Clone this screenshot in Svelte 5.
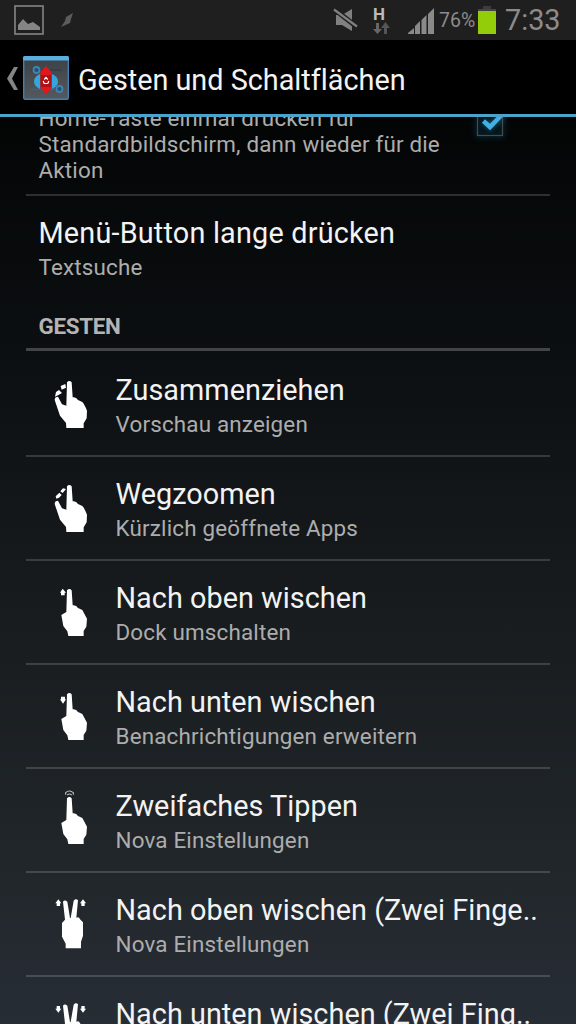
<script>
  const gestures = [
    { icon: 'pinch',     title: 'Zusammenziehen',  summary: 'Vorschau anzeigen' },
    { icon: 'spread',    title: 'Wegzoomen',       summary: 'Kürzlich geöffnete Apps' },
    { icon: 'up',        title: 'Nach oben wischen',  summary: 'Dock umschalten' },
    { icon: 'down',      title: 'Nach unten wischen', summary: 'Benachrichtigungen erweitern' },
    { icon: 'doubletap', title: 'Zweifaches Tippen',  summary: 'Nova Einstellungen' },
    { icon: 'up2',       title: 'Nach oben wischen (Zwei Finge..', summary: 'Nova Einstellungen' },
    { icon: 'down2',     title: 'Nach unten wischen (Zwei Fing..', summary: '' },
  ];
</script>

<div class="screen">
  <header class="status">
    <svg class="picture" width="30" height="30" viewBox="0 0 30 30">
      <rect x="1" y="1" width="28" height="28" fill="none" stroke="#858585" stroke-width="1.600" />
      <path d="M4 25V20L9 14L14 19L19 17L26 22V25Z" fill="#858585" />
    </svg>
    <svg class="bolt" width="14" height="16" viewBox="0 0 14 16">
      <path d="M12 0L5 4L4 8L0 14L9 10L10 6Z" fill="#5c5c5c" />
    </svg>

    <svg class="mute" width="26" height="24" viewBox="0 0 26 24">
      <path d="M3 7H9L19 1V23L9 17H3Z" fill="#808080" />
      <path d="M1 1L24 19" stroke="#1f1f1f" stroke-width="5" />
      <path d="M1 1.500L24 18.500" stroke="#808080" stroke-width="2.200" />
    </svg>
    <div class="network">
      <span>H</span>
      <svg width="17" height="13" viewBox="0 0 17 13">
        <path d="M3 1H6V7H9L4.500 12L0 7H3Z" fill="#666" />
        <path d="M11 12H14V6H17L12.500 0L8 6H11Z" fill="#555" />
      </svg>
    </div>
    <svg class="signal" width="27" height="26" viewBox="0 0 27 26">
      <path d="M0 26V25L6 20V26ZM7 26V18L12 13V26ZM13.500 26V12L18.500 7V26ZM20 26V6L26 0V26Z" fill="#8a8a8a" />
    </svg>
    <span class="percent">76%</span>
    <svg class="battery" width="18" height="28" viewBox="0 0 18 28">
      <rect x="5" y="0" width="8" height="3" fill="#3c3c3c" />
      <rect x="0" y="3" width="18" height="2" fill="#444" />
      <rect x="0" y="5" width="18" height="23" fill="#93cc08" />
    </svg>
    <span class="clock">7:33</span>
  </header>

  <div class="actionbar">
    <svg class="back" width="11" height="23" viewBox="0 0 11 23">
      <path d="M7 0H11L5 11.500L11 23H7L0 11.500Z" fill="#858585" />
    </svg>
    <svg class="app" width="46" height="44" viewBox="0 0 46 44">
      <defs>
        <linearGradient id="tile" x1="0" y1="0" x2="0" y2="1">
          <stop offset="0" stop-color="#3c4145" />
          <stop offset="1" stop-color="#55595d" />
        </linearGradient>
      </defs>
      <rect x=".7" y="1" width="44.600" height="42.300" rx="1.500" fill="url(#tile)" stroke="#417fb0" stroke-width="1.400" />
      <rect x="0" y="0" width="46" height="4.500" rx="1.500" fill="#5aaee0" />
      <path d="M8 14H39" stroke="#2d3f52" stroke-width="1.500" />
      <path d="M8 33.500H32" stroke="#35658d" stroke-width="1.500" />
      <circle cx="13.500" cy="14" r="3" fill="#2c4e6c" stroke="#3d83b5" stroke-width="1.800" />
      <circle cx="36.500" cy="33" r="3" fill="#2c4e6c" stroke="#3d83b5" stroke-width="1.800" />
      <path d="M17 18V33C9 30 9 21 17 18ZM29 18V33C37 30 37 21 29 18Z" fill="#35a5de" />
      <path d="M23 10L28.500 16V32L23 38.500L17.500 32V16Z" fill="#e0181b" />
      <rect x="18" y="19" width="10" height="12" fill="#b01016" />
      <path d="M21.300 23.500L23 21.500L24.700 23.500M25.800 25L24.800 27.500H21.200L20.200 25" fill="none" stroke="#fff" stroke-width="1.200" />
    </svg>
    <h1>Gesten und Schaltflächen</h1>
  </div>

  <main>
    <div class="pref home">
      <p>Home-Taste einmal drücken für<br />Standardbildschirm, dann wieder für die<br />Aktion</p>
      <svg class="check" width="36" height="36" viewBox="0 0 36 36">
        <rect x="5.500" y="5.500" width="25" height="25" fill="none" stroke="#4a4a4a" stroke-width="1.200" />
        <path d="M11.500 16L18 22L31 8.500" fill="none" stroke="#43b0e4" stroke-width="4.500" />
      </svg>
    </div>

    <div class="pref menu">
      <div class="text">
        <h2>Menü-Button lange drücken</h2>
        <p>Textsuche</p>
      </div>
    </div>

    <h3>GESTEN</h3>

    {#each gestures as { icon, title, summary }}
      <div class="pref gesture">
        <svg class="hand" width="70" height="70" viewBox="0 0 210 210" fill="#fff">
          {#if icon === 'pinch' || icon === 'spread'}
            <path d="M81 37Q88 29 95 37L98 82Q108 80 114 90L127 96Q133 102 141 122L140 145L131 160V174H79L78 159L60 137L44 90Q44 80 54 80L66 103L79 107Z" />
            {#if icon === 'pinch'}
              <path d="M76 42L78 53L65 59L62 48ZM57 60L66 69L54 76L45 80L48 66Z" />
            {:else}
              <path d="M69 43L78 45L68 57L61 52ZM58 56L65 63L57 71L49 74L47 67Z" />
            {/if}
          {:else if icon === 'up2' || icon === 'down2'}
            <path d="M69 35Q74 28 82 35L90 84H92L101 32Q108 24 114 31L109 83Q117 79 120 88L129 97V137L123 155V175H77V161L66 140V99L75 89Z" />
            {#if icon === 'up2'}
              <path d="M55 28L64 40H60V48H50V40H46ZM129 28L138 40H134V48H124V40H120Z" />
            {:else}
              <path d="M50 36H60V44H64L55 56L46 44H50ZM124 36H134V44H138L129 56L120 44H124Z" />
            {/if}
          {:else}
            <path d="M81 37Q88 29 95 37L98 82Q108 80 114 90L127 96L141 122L139 146L131 159V174H85L82 160L70 144L64 111L79 102Z" />
            {#if icon === 'up'}
              <path d="M68 32L78 44H74V52H63V44H60Z" />
            {:else if icon === 'down'}
              <path d="M63 44H75V52H78L69 65L60 52H63Z" />
            {:else}
              <path d="M77 26V20Q88 10 100 20V26M82 27Q88 21 95 27" fill="none" stroke="#bbb" stroke-width="3.500" />
            {/if}
          {/if}
        </svg>
        <div class="text">
          <h2>{title}</h2>
          {#if summary}<p>{summary}</p>{/if}
        </div>
      </div>
    {/each}
  </main>
</div>

<style>
  :global(body) {
    background: #000;
    overflow: hidden;
  }

  .screen {
    width: 576px;
    height: 1024px;
    display: flex;
    flex-direction: column;
    overflow: hidden;
    font-family: Roboto, sans-serif;
    font-variant-ligatures: none;
    background: linear-gradient(#000 0, #030505 115px, #0c0f11 350px, #171b1e 600px, #21262a 860px, #272d35 1024px);
  }

  h1, h2, h3, p {
    margin: 0;
    font-weight: 400;
    white-space: nowrap;
  }

  /* Status bar */
  .status {
    height: 40px;
    flex-shrink: 0;
    display: flex;
    align-items: flex-start;
    background: #1f1f1f;
    color: #8c8c8c;
  }

  .picture { margin: 5px 0 0 14px; }
  .bolt { margin: 13px 0 0 17px; }
  .mute { margin: 8px 0 0 auto; }

  .network {
    width: 18px;
    margin: 6px 2px 0 14px;
    display: flex;
    flex-direction: column;
  }

  .network span {
    font-size: 17px;
    line-height: 16px;
    font-weight: 700;
    color: #bbb;
  }

  .signal { margin: 8px 0 0 15px; }

  .percent {
    width: 39px;
    margin-left: 4px;
    font-size: 19.5px;
    line-height: 41px;
  }

  .battery { margin-top: 6px; }

  .clock {
    width: 62px;
    padding-left: 9px;
    margin-right: 9px;
    font-size: 28.8px;
    line-height: 40px;
  }

  /* Action bar */
  .actionbar {
    height: 77px;
    flex-shrink: 0;
    box-sizing: border-box;
    display: flex;
    align-items: center;
    background: #000;
    border-bottom: 3px solid #4ba3cc;
  }

  .back { margin: 3px 0 0 7px; }
  .app { margin: 2px 0 0 5px; }

  h1 {
    margin: 6px 0 0 9px;
    font-size: 28.8px;
    color: #f3f3f3;
  }

  /* Preference list */
  main {
    flex: 1;
    min-height: 0;
    overflow: hidden;
    padding: 0 26px;
  }

  .pref {
    height: 104px;
    box-sizing: border-box;
    display: flex;
    align-items: flex-start;
    border-top: 2px solid rgba(255, 255, 255, 0.16);
  }

  h2 {
    font-size: 28.8px;
    line-height: 34px;
    letter-spacing: 0.04px;
    color: #f3f3f3;
  }

  p {
    font-size: 22.4px;
    line-height: 26px;
    letter-spacing: 0.18px;
    color: #adadad;
  }

  .text {
    padding-top: 20px;
  }

  .text p { margin-top: 4px; }

  .home {
    height: 77px;
    border-top: 0;
    padding-left: 12.5px;
    justify-content: space-between;
  }

  .home p { margin-top: -12px; }

  .check {
    margin: -12px 42px 0 0;
    filter: drop-shadow(0 0 3px #1579a8);
  }

  .menu { padding-left: 12.5px; }
  .menu h2 { letter-spacing: 0.2px; }

  h3 {
    height: 53px;
    box-sizing: border-box;
    padding: 15px 0 0 12.5px;
    font-size: 22.4px;
    line-height: 26px;
    font-weight: 700;
    letter-spacing: -0.3px;
    color: #b4b4b4;
    border-bottom: 3px solid #424446;
  }

  h3 + .gesture { border-top-color: transparent; }

  .hand {
    margin: 17px 5.5px 0 14px;
    flex-shrink: 0;
  }
</style>
